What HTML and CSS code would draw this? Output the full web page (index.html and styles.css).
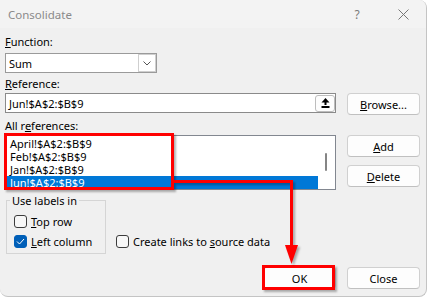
FILE: index.html
```html
<!DOCTYPE html>
<html lang="en">

<head>
    <meta charset="UTF-8">
    <title>Consolidate</title>
    <link rel="stylesheet" href="styles.css">
</head>

<body>
    <div class="dialog">
        <div class="titlebar">
            <span class="title">Consolidate</span>
            <span class="tb-btn help">?</span>
            <span class="tb-btn">
                <svg width="11" height="11" viewBox="0 0 11 11">
                    <path d="M0.5 0.5 L10.5 10.5 M10.5 0.5 L0.5 10.5" stroke="#767676" stroke-width="1" fill="none" />
                </svg>
            </span>
        </div>

        <div class="content">
            <label class="field-label"><u>F</u>unction:</label>
            <div class="select">
                <span>Sum</span>
                <span class="drop">
                    <svg width="8" height="5" viewBox="0 0 8 5">
                        <path d="M0.5 0.5 L4 4 L7.5 0.5" stroke="#555" stroke-width="1" fill="none" />
                    </svg>
                </span>
            </div>

            <label class="field-label ref-label"><u>R</u>eference:</label>
            <div class="row">
                <div class="textbox">
                    <span>Jun!$A$2:$B$9</span>
                    <span class="collapse">
                        <svg width="9" height="10" viewBox="0 0 9 10">
                            <polygon points="4.5,0 8.5,4.5 0.5,4.5" fill="#000" />
                            <rect x="3.5" y="4" width="2" height="3" fill="#000" />
                            <rect x="0.5" y="8" width="8" height="2" fill="#000" />
                        </svg>
                    </span>
                </div>
                <button class="btn"><u>B</u>rowse...</button>
            </div>

            <label class="field-label all-label">All r<u>e</u>ferences:</label>
            <div class="row list-row">
                <div class="listbox">
                    <div class="items">
                        <div class="item">April!$A$2:$B$9</div>
                        <div class="item">Feb!$A$2:$B$9</div>
                        <div class="item">Jan!$A$2:$B$9</div>
                        <div class="item selected">Jun!$A$2:$B$9</div>
                    </div>
                    <div class="scroll"><span class="thumb"></span></div>
                </div>
                <div class="side">
                    <button class="btn"><u>A</u>dd</button>
                    <button class="btn"><u>D</u>elete</button>
                </div>
            </div>

            <div class="options">
                <fieldset class="group">
                    <legend>Use labels in</legend>
                    <label class="check"><span class="box"></span><span><u>T</u>op row</span></label>
                    <label class="check second"><span class="box checked">
                            <svg width="9" height="7" viewBox="0 0 9 7">
                                <path d="M1 3.5 L3.5 6 L8 1" stroke="#fff" stroke-width="1" fill="none" />
                            </svg>
                        </span><span><u>L</u>eft column</span></label>
                </fieldset>
                <label class="check links"><span class="box"></span><span>Create links to <u>s</u>ource data</span></label>
            </div>

            <div class="footer">
                <button class="btn">OK</button>
                <button class="btn">Close</button>
            </div>
        </div>

        <!-- red callouts drawn over the dialog -->
        <div class="mark mark-list"></div>
        <div class="mark mark-ok"></div>
        <svg class="arrow" width="428" height="297" viewBox="0 0 428 297">
            <path d="M174 181.5 L291.5 181.5 L291.5 248" stroke="#ff0000" stroke-width="3" fill="none" />
            <polygon points="285,245 298,245 291.5,264" fill="#ff0000" />
        </svg>
    </div>
</body>

</html>
```

FILE: styles.css
```css
body {
    margin: 0;
    background: #fff;
    font-family: "Noto Sans", "Open Sans", sans-serif;
    font-size: 11px;
    color: #000;
}

.dialog {
    position: relative;
    width: 427px;
    height: 297px;
    box-sizing: border-box;
    background: #f0f0f0;
    border-right: 1px solid #c4c4c4;
    border-bottom: 1px solid #c4c4c4;
    border-radius: 0 8px 8px 8px;
    overflow: hidden;
}

.titlebar {
    display: flex;
    align-items: center;
    height: 28px;
    background: #f3f3f3;
}

.title {
    flex: 1;
    padding-left: 8px;
    color: #8a8a8a;
    font-size: 11.5px;
}

.tb-btn {
    width: 46px;
    height: 28px;
    display: flex;
    align-items: center;
    justify-content: center;
}

.help {
    color: #7a7a7a;
    font-size: 12px;
}

.content {
    padding: 6px 6px 0 5px;
}

.field-label {
    display: block;
    line-height: 15px;
}

.select {
    margin-top: 4px;
    width: 152px;
    height: 20px;
    box-sizing: border-box;
    border: 1px solid #9a9a9a;
    background: #fff;
    display: flex;
    align-items: center;
    padding-left: 3px;
}

.drop {
    margin-left: auto;
    width: 18px;
    height: 18px;
    box-sizing: border-box;
    border: 1px solid #cfcfcf;
    display: flex;
    align-items: center;
    justify-content: center;
}

.ref-label {
    margin-top: 3px;
}

.all-label {
    margin-top: 3px;
}

.row {
    display: flex;
    align-items: flex-start;
    gap: 11px;
    margin-top: 2px;
}

.textbox {
    width: 331px;
    height: 20px;
    box-sizing: border-box;
    border: 1px solid #8a8a8a;
    background: #fff;
    display: flex;
    align-items: center;
    padding-left: 3px;
}

.collapse {
    margin-left: auto;
    width: 20px;
    height: 17px;
    box-sizing: border-box;
    border: 1px solid #bdbdbd;
    border-radius: 3px;
    background: #fdfdfd;
    display: flex;
    align-items: center;
    justify-content: center;
}

.btn {
    width: 73px;
    height: 22px;
    box-sizing: border-box;
    border: 1px solid #d0d0d0;
    border-bottom-color: #c0c0c0;
    border-radius: 4px;
    background: #fdfdfd;
    font: inherit;
    color: #000;
    padding: 0;
}

.listbox {
    width: 331px;
    height: 55px;
    box-sizing: border-box;
    border: 1px solid #828790;
    background: #fff;
    display: flex;
}

.items {
    width: 312px;
    padding-top: 1px;
}

.item {
    height: 13px;
    line-height: 13px;
    padding-left: 4px;
}

.item.selected {
    background: #0078d7;
    color: #fff;
}

.scroll {
    flex: 1;
    padding: 17px 0 0 7px;
}

.thumb {
    display: block;
    width: 2px;
    height: 18px;
    border-radius: 1px;
    background: #858585;
}

.side {
    display: flex;
    flex-direction: column;
    gap: 8px;
}

.options {
    display: flex;
    align-items: flex-end;
    gap: 10px;
    margin-top: 3px;
}

.group {
    margin: 0 0 0 1px;
    width: 100px;
    box-sizing: border-box;
    border: 1px solid #d5d5d5;
    padding: 6px 0 4px 0;
}

.group legend {
    margin-left: 3px;
    padding: 0 2px;
    line-height: 15px;
}

.check {
    display: flex;
    align-items: center;
    gap: 4px;
    height: 15px;
    line-height: 15px;
    padding-left: 7px;
}

.check.second {
    margin-top: 5px;
}

.check.links {
    padding-left: 0;
    margin-bottom: 5px;
}

.box {
    width: 13px;
    height: 13px;
    box-sizing: border-box;
    border: 1px solid #3c3c3c;
    border-radius: 3px;
    background: #f7f7f7;
    display: flex;
    align-items: center;
    justify-content: center;
}

.box.checked {
    background: #005fb8;
    border-color: #005fb8;
}

.footer {
    display: flex;
    justify-content: flex-end;
    gap: 11px;
    margin-top: 13px;
}

.mark {
    position: absolute;
    box-sizing: border-box;
    border: 3px solid #ff0000;
    box-shadow: 2px 2px 2px rgba(0, 0, 0, 0.3);
}

.mark-list {
    left: 4px;
    top: 133px;
    width: 170px;
    height: 57px;
}

.mark-ok {
    left: 262px;
    top: 265px;
    width: 73px;
    height: 25px;
}

.arrow {
    position: absolute;
    left: 0;
    top: 0;
    pointer-events: none;
    filter: drop-shadow(2px 2px 1px rgba(0, 0, 0, 0.3));
}
```
